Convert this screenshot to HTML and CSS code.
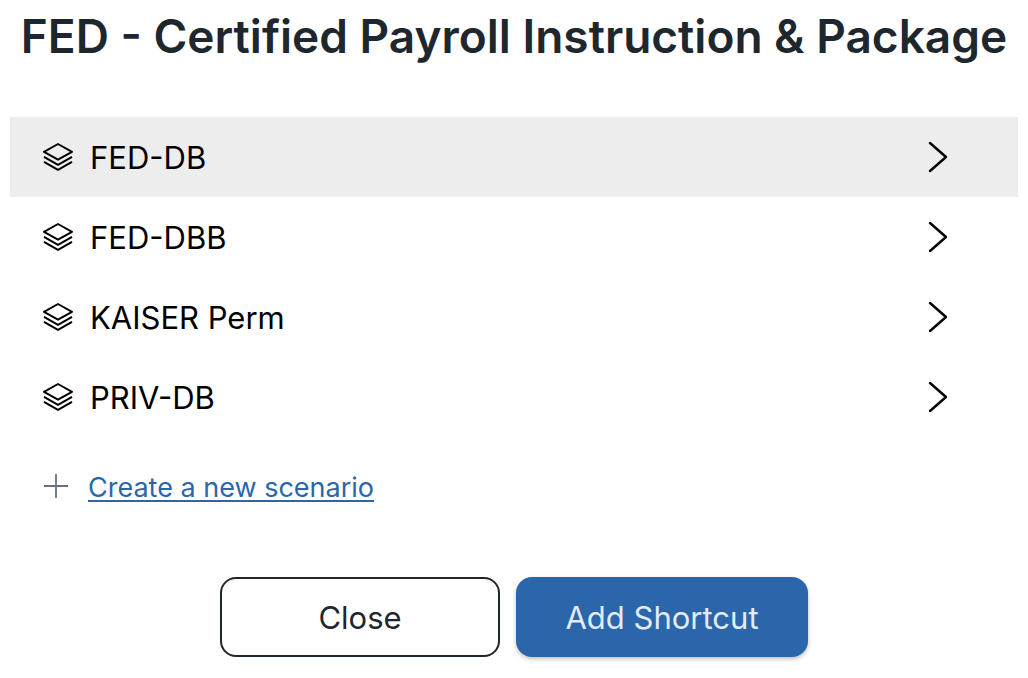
FILE: index.html
```
<!DOCTYPE html>
<html lang="en">
<head>
<meta charset="utf-8">
<meta name="viewport" content="width=device-width, initial-scale=1">
<title>FED - Certified Payroll Instruction &amp; Package</title>
<link rel="stylesheet" href="styles.css">
</head>
<body>
<svg class="symbols" aria-hidden="true">
  <symbol id="layers" viewBox="0 0 32 32"><g fill="none" stroke="currentColor" stroke-width="2" stroke-linejoin="round"><path d="M16 3 2 10.8l14 7.9 14-7.9z"/><path d="m2 15.9 14 7.9 14-7.9"/><path d="m2 20.9 14 7.9 14-7.9"/></g></symbol>
  <symbol id="chevron" viewBox="0 0 20 32"><path d="M2 2l16 14L2 30" fill="none" stroke="currentColor" stroke-width="2.4" stroke-linecap="round" stroke-linejoin="round"/></symbol>
</svg>
<main class="dialog">
  <h1 class="title">FED - Certified Payroll Instruction &amp; Package</h1>
  <ul class="scenarios">
    <li><button class="scenario selected" type="button"><svg class="layers" aria-hidden="true"><use href="#layers"/></svg><span class="name">FED-DB</span><svg class="chevron" aria-hidden="true"><use href="#chevron"/></svg></button></li>
    <li><button class="scenario" type="button"><svg class="layers" aria-hidden="true"><use href="#layers"/></svg><span class="name">FED-DBB</span><svg class="chevron" aria-hidden="true"><use href="#chevron"/></svg></button></li>
    <li><button class="scenario" type="button"><svg class="layers" aria-hidden="true"><use href="#layers"/></svg><span class="name">KAISER Perm</span><svg class="chevron" aria-hidden="true"><use href="#chevron"/></svg></button></li>
    <li><button class="scenario" type="button"><svg class="layers" aria-hidden="true"><use href="#layers"/></svg><span class="name">PRIV-DB</span><svg class="chevron" aria-hidden="true"><use href="#chevron"/></svg></button></li>
  </ul>
  <div class="create">
    <svg class="plus" viewBox="0 0 24 24" aria-hidden="true"><path d="M12 0v24M0 12h24" stroke="currentColor" stroke-width="1.8"/></svg>
    <a class="create-link" href="#new">Create a new scenario</a>
  </div>
  <div class="actions">
    <button class="button close" type="button">Close</button>
    <button class="button add" type="button">Add Shortcut</button>
  </div>
</main>
</body>
</html>
```
FILE: styles.css
```
* { box-sizing: border-box; }
body { margin: 0; background: #fff; color: #000; font-family: Inter, "Liberation Sans", sans-serif; }
.symbols { position: absolute; width: 0; height: 0; }
.dialog { padding: 0 10px 20px; }
.title { margin: 0 0 45px; line-height: 72px; font-size: 46px; font-weight: 600; text-align: center; color: #1f272e; white-space: nowrap; }
.scenarios { list-style: none; margin: 0; padding: 0; }
.scenario { display: flex; align-items: center; width: 100%; height: 80px; padding: 0 70px 0 32px; border: 0; background: transparent; color: inherit; font: inherit; font-size: 31px; line-height: 40px; text-align: left; }
.scenario.selected { background: #ededed; }
.layers { width: 32px; height: 32px; margin-right: 16px; }
.name { flex: 1; padding-top: 2px; }
.chevron { width: 20px; height: 32px; }
.create { display: flex; align-items: center; gap: 20px; padding: 27px 34px 0; line-height: 40px; font-size: 27px; }
.plus { width: 24px; height: 24px; color: #67737f; }
.create-link { padding-top: 4px; color: #2a66a9; text-decoration-thickness: 2px; text-underline-offset: 3px; }
.actions { display: flex; justify-content: center; gap: 16px; margin-top: 69px; }
.button { height: 80px; border-radius: 16px; font: inherit; font-size: 31px; line-height: 40px; }
.close { width: 280px; padding: 2px 0 0; border: 2px solid #1f272e; background: #fff; color: #1f272e; }
.add { width: 292px; padding: 2px 0 0; border: 0; background: #2a66a9; color: #e3ebf8; box-shadow: 0 2px 4px rgba(0, 0, 0, 0.25); }
```
